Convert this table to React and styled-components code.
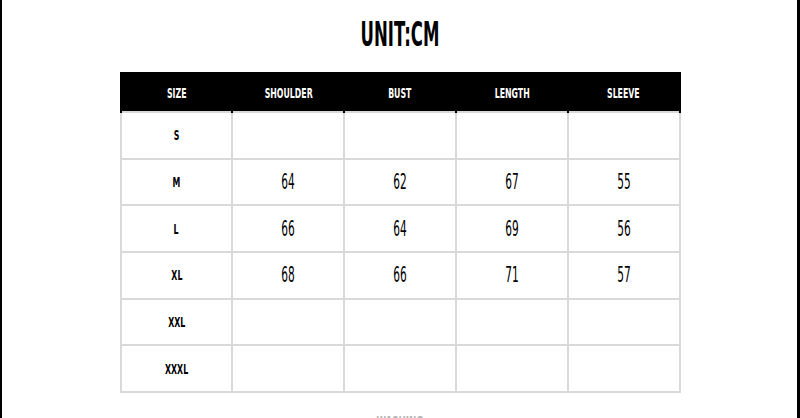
import React from "react";
import styled, { createGlobalStyle } from "styled-components";

const GlobalStyle = createGlobalStyle`
  html, body {
    margin: 0;
    padding: 0;
    overflow: hidden;
    background: #fff;
    font-family: "DejaVu Sans", "Liberation Sans", sans-serif;
  }
`;

const StPage = styled.div`
  box-sizing: border-box;
  width: 800px;
  height: 418px;
  border-left: 2px solid #000;
  border-right: 3px solid #000;
  display: flex;
  flex-direction: column;
  align-items: center;
  padding-top: 14px;
  overflow: hidden;
`;

const StTitle = styled.h1`
  margin: 0;
  height: 40px;
  font-size: 34px;
  line-height: 40px;
  font-weight: 700;
  font-stretch: condensed;
  color: #000;
  text-align: center;
`;

const Squeeze = styled.span`
  display: inline-block;
  transform: scaleX(${(p) => p.$scale || 0.6});
  transform-origin: center;
  white-space: nowrap;
`;

const StTable = styled.table`
  margin-top: 18px;
  margin-left: 1px;
  width: 561px;
  border-collapse: collapse;
  table-layout: fixed;
`;

const StHead = styled.th`
  height: 37px;
  padding: 0;
  background: #000;
  color: #fff;
  font-size: 14px;
  font-weight: 700;
  font-stretch: condensed;
  border: 2px solid #000;
  border-bottom: 0;
  text-align: center;
  vertical-align: middle;
`;

const StCell = styled.td`
  height: 44.7px;
  padding: 0;
  border: 2px solid #d9d9d9;
  text-align: center;
  vertical-align: middle;
  color: #000;
  font-stretch: condensed;
  font-size: ${(p) => (p.$label ? "14px" : "21px")};
  font-weight: ${(p) => (p.$label ? 700 : 400)};
`;

const StFooterTitle = styled.div`
  margin-top: 20px;
  font-size: 14px;
  font-weight: 700;
  color: #b5b5b5;
`;

const heads = ["SIZE", "SHOULDER", "BUST", "LENGTH", "SLEEVE"];
const rows = [
  ["S", "", "", "", ""],
  ["M", "64", "62", "67", "55"],
  ["L", "66", "64", "69", "56"],
  ["XL", "68", "66", "71", "57"],
  ["XXL", "", "", "", ""],
  ["XXXL", "", "", "", ""],
];

function App() {
  return (
    <StPage>
      <GlobalStyle />
      <StTitle>
        <Squeeze $scale={0.54}>UNIT:CM</Squeeze>
      </StTitle>
      <StTable>
        <thead>
          <tr>
            {heads.map((h) => (
              <StHead key={h}>
                <Squeeze $scale={0.62}>{h}</Squeeze>
              </StHead>
            ))}
          </tr>
        </thead>
        <tbody>
          {rows.map((r) => (
            <tr key={r[0]}>
              {r.map((v, i) => (
                <StCell key={i} $label={i === 0}>
                  <Squeeze $scale={i === 0 ? 0.62 : 0.56}>{v}</Squeeze>
                </StCell>
              ))}
            </tr>
          ))}
        </tbody>
      </StTable>
      <StFooterTitle>
        <Squeeze $scale={0.62}>WASHING</Squeeze>
      </StFooterTitle>
    </StPage>
  );
}

export default App;
